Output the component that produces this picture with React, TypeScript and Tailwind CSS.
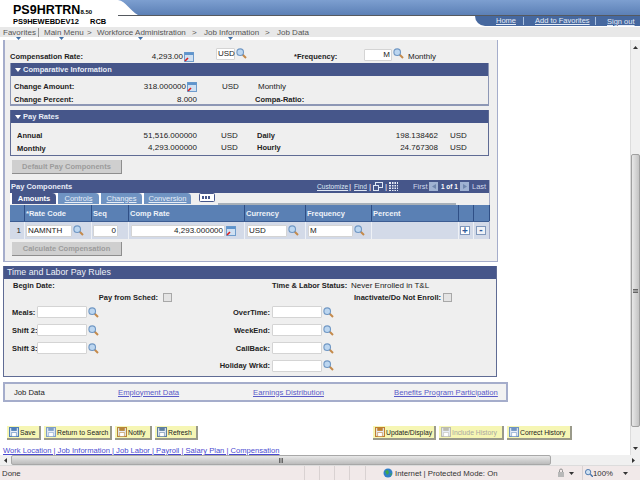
import React from "react";

const Mag = ({ className = "" }: { className?: string }) => (
  <svg width="11" height="11" viewBox="0 0 11 11" className={"shrink-0 " + className}>
    <line x1="6.5" y1="6.5" x2="10" y2="10" stroke="#c58a4a" strokeWidth="2" />
    <circle cx="4.2" cy="4.2" r="3.3" fill="#bcd6f0" stroke="#6f97c4" strokeWidth="1.1" />
  </svg>
);

const Cal = ({ className = "" }: { className?: string }) => (
  <svg width="10" height="10" viewBox="0 0 10 10" className={"shrink-0 " + className}>
    <rect x="0.5" y="0.5" width="9" height="9" fill="#cfe0f2" stroke="#6f9ccc" />
    <rect x="0.5" y="0.5" width="9" height="2.5" fill="#5f94cc" />
    <line x1="1" y1="9" x2="4" y2="6" stroke="#d81e1e" strokeWidth="1.6" />
  </svg>
);

const Inp = ({ w, children, right }: { w: string; children?: React.ReactNode; right?: boolean }) => (
  <div
    className={
      "h-[12px] shrink-0 bg-white border border-[#d4d4d4] rounded-[1px] text-[8px] leading-[10px] px-[1px] text-[#222] whitespace-nowrap " +
      (right ? "text-right " : "") +
      w
    }
  >
    {children}
  </div>
);

const SectionHead = ({ title }: { title: string }) => (
  <div className="h-[13px] bg-[#46568a] flex items-center pl-[4px] text-[#e8ecf6]">
    <svg width="6" height="4" viewBox="0 0 6 4" className="mr-[2px]">
      <path d="M0 0h6L3 4z" fill="#fff" />
    </svg>
    <b>{title}</b>
  </div>
);

const Tab = ({ w, label, active }: { w: string; label: string; active?: boolean }) => (
  <div
    className={
      "h-[11px] rounded-tr-[4px] flex items-center justify-center text-[7.5px] leading-none border-l-2 border-white shrink-0 " +
      (active ? "bg-[#46568a] text-white font-bold" : "bg-[#6f93c2] text-[#e6edf6] underline") +
      " " +
      w
    }
  >
    {label}
  </div>
);

const HCol = ({ w, label }: { w: string; label?: string }) => (
  <div className={"h-full border-r border-[#2f4f86] text-[#eef2f8] font-bold text-[7.5px] leading-[17px] pl-[1px] shrink-0 whitespace-nowrap " + w}>{label}</div>
);

const BCol = ({ w, children, cls = "" }: { w: string; children?: React.ReactNode; cls?: string }) => (
  <div className={"h-full border-r border-[#eef1f6] flex items-center shrink-0 " + w + " " + cls}>{children}</div>
);

const Btn = ({ w, label, icon, dim }: { w: string; label: string; icon: React.ReactNode; dim?: boolean }) => (
  <div
    className={
      "h-[14px] shrink-0 bg-[#f6f6b4] border-r-2 border-b-2 border-[#9a9a8a] flex items-center pl-[2px] gap-[1px] text-[6.8px] whitespace-nowrap overflow-hidden " +
      (dim ? "text-[#a8a8a0] " : "text-[#222] ") +
      w
    }
  >
    {icon}
    {label}
  </div>
);

const BIcon = ({ c }: { c: string }) => (
  <svg width="10" height="10" viewBox="0 0 9 9" className="shrink-0">
    <rect x="0.5" y="0.5" width="8" height="8" fill="#e8eef8" stroke={c} />
    <rect x="2" y="0.5" width="5" height="3" fill={c} />
    <rect x="2.5" y="5" width="4" height="3.5" fill="#fff" stroke={c} strokeWidth="0.5" />
  </svg>
);

const Sep = ({ w }: { w: string }) => <div className={"h-full border-r border-[#d9d2d2] shrink-0 " + w} />;

const NavMark = ({ ml }: { ml: string }) => (
  <svg width="5" height="3" viewBox="0 0 5 3" className={"shrink-0 " + ml}>
    <path d="M0 0h5L2.5 3z" fill="#3f6fa8" />
  </svg>
);

export default function App() {
  return (
    <div className="w-[640px] h-[480px] overflow-hidden bg-white flex flex-col text-[#222] font-['Liberation_Sans',Arial,sans-serif] text-[8px] leading-[11px] [&_b]:text-[7.5px]">
      <div className="flex flex-1 min-h-0">
        <div className="w-[630px] shrink-0 flex flex-col">
          {/* Header */}
          <div className="h-[27px] w-[640px] flex shrink-0">
            <div className="w-[118px] shrink-0 pl-[13px] text-black">
              <div className="h-[16px] pt-[3px] font-bold text-[12.5px] leading-[15px] whitespace-nowrap">
                PS9HRTRN<span className="text-[6px] leading-none">8.50</span>
              </div>
              <div className="flex font-bold text-[7.5px] leading-[10px] pt-[1px] whitespace-nowrap">
                <span className="w-[77px]">PS9HEWEBDEV12</span>
                <span>RCB</span>
              </div>
            </div>
            <div className="flex-1 flex flex-col">
              <div className="h-[16px] flex border-b border-[#55595f] bg-linear-to-b from-[#7d9fd0] to-[#5c80b6]">
                <svg width="20" height="15" viewBox="0 0 20 15" className="shrink-0">
                  <path d="M0 0 C8 1 12 11 20 15 L0 15 Z" fill="#fff" />
                </svg>
              </div>
              <div className="flex justify-end flex-1">
                <div className="w-[165px] h-[10px] bg-[#46689f] rounded-bl-[10px] flex items-center text-[7.5px] text-[#e4ecf8] pl-[21px] whitespace-nowrap">
                  <span className="w-[28px] h-[8px] leading-[8px] border-r border-[#a8c0e0] mr-[11px] shrink-0 underline">Home</span>
                  <span className="w-[61px] h-[8px] leading-[8px] border-r border-[#a8c0e0] mr-[11px] shrink-0 underline">Add to Favorites</span>
                  <span className="underline shrink-0">Sign out</span>
                </div>
              </div>
            </div>
          </div>
          {/* Nav */}
          <div className="h-[10px] w-[640px] bg-[#e8e8e8] shrink-0 flex items-center pl-[3px] text-[#555] whitespace-nowrap">
            <span className="w-[36px] h-[9px] leading-[9px] border-r border-[#999] mr-[5px] shrink-0">Favorites</span>
            <span className="w-[43px] shrink-0">Main Menu</span>
            <span className="w-[10px] shrink-0">&gt;</span>
            <span className="w-[95px] shrink-0">Workforce Administration</span>
            <span className="w-[12px] shrink-0">&gt;</span>
            <span className="w-[61px] shrink-0">Job Information</span>
            <span className="w-[12px] shrink-0">&gt;</span>
            <span className="shrink-0">Job Data</span>
          </div>
          <div className="h-[3px] flex shrink-0">
            <NavMark ml="ml-[16px]" />
            <NavMark ml="ml-[38px]" />
            <NavMark ml="ml-[74px]" />
            <NavMark ml="ml-[85px]" />
          </div>

          {/* Main panel */}
          <div className="ml-[3px] w-[495px] h-[222px] shrink-0 bg-[#efefef] border-l-2 border-r border-b border-[#a5adcb] pl-[5px]">
            <div className="h-[23px] pt-[7px] flex items-center">
              <b className="w-[100px] shrink-0 whitespace-nowrap mt-[3px]">Compensation Rate:</b>
              <span className="w-[73px] text-right shrink-0 mt-[3px]">4,293.00</span>
              <Cal className="ml-[1px] mt-[3px]" />
              <div className="ml-[22px] mb-[3px]"><Inp w="w-[19px]">USD</Inp></div>
              <Mag className="ml-[1px] mb-[4px]" />
              <b className="ml-[47px] w-[42px] whitespace-nowrap shrink-0 mt-[3px]">*Frequency:</b>
              <div className="ml-[28px] mb-[1px]"><Inp w="w-[28px]" right>M</Inp></div>
              <Mag className="ml-[1px] mb-[3px]" />
              <span className="ml-[4px] mt-[3px]">Monthly</span>
            </div>

            <div className="w-[479px] h-[43px] border-x border-b-2 border-[#8d97b5]">
              <SectionHead title="Comparative Information" />
              <div className="flex items-center h-[15px] mt-[3px] pl-[3px]">
                <b className="w-[80px] shrink-0">Change Amount:</b>
                <span className="w-[92px] text-right shrink-0">318.000000</span>
                <Cal className="ml-[1px]" />
                <span className="ml-[25px] w-[36px] shrink-0">USD</span>
                <span>Monthly</span>
              </div>
              <div className="flex items-center h-[11px] pl-[3px]">
                <b className="w-[80px] shrink-0">Change Percent:</b>
                <span className="w-[103px] text-right shrink-0">8.000</span>
                <b className="ml-[58px]">Compa-Ratio:</b>
              </div>
            </div>

            <div className="mt-[4px] w-[479px] h-[46px] border-x border-b border-[#5f6b94]">
              <SectionHead title="Pay Rates" />
              <div className="flex items-center h-[12px] mt-[6px] pl-[6px]">
                <b className="w-[60px] shrink-0 mt-[1px]">Annual</b>
                <span className="w-[120px] text-right shrink-0">51,516.000000</span>
                <span className="ml-[24px] w-[36px] shrink-0">USD</span>
                <b className="w-[60px] shrink-0">Daily</b>
                <span className="w-[121px] text-right shrink-0">198.138462</span>
                <span className="ml-[12px]">USD</span>
              </div>
              <div className="flex items-center h-[13px] pl-[6px]">
                <b className="w-[60px] shrink-0 mt-[2px]">Monthly</b>
                <span className="w-[120px] text-right shrink-0">4,293.000000</span>
                <span className="ml-[24px] w-[36px] shrink-0">USD</span>
                <b className="w-[60px] shrink-0">Hourly</b>
                <span className="w-[121px] text-right shrink-0">24.767308</span>
                <span className="ml-[12px]">USD</span>
              </div>
            </div>

            <div className="mt-[4px] ml-[2px] w-[110px] h-[14px] bg-[#cfcfcf] border-r border-b border-[#8e8e8e] text-[#9c9c9c] flex items-center justify-center">
              <b>Default Pay Components</b>
            </div>

            {/* Pay components grid */}
            <div className="mt-[6px] w-[480px] h-[59px] border-b-2 border-r border-[#a5adc8]">
              <div className="h-[13px] bg-[#46568a] flex items-center text-white pl-[1px] whitespace-nowrap">
                <b className="w-[306px] shrink-0 text-[#e8ecf6]">Pay Components</b>
                <span className="w-[32px] underline text-[6.6px] shrink-0 text-[#dfe7f4]">Customize</span>
                <span className="w-[5px] shrink-0">|</span>
                <span className="w-[15px] underline text-[6.6px] shrink-0 text-[#dfe7f4]">Find</span>
                <span className="w-[4px] shrink-0">|</span>
                <svg width="10" height="9" viewBox="0 0 10 9" className="shrink-0">
                  <rect x="2.5" y="0.5" width="7" height="5" fill="none" stroke="#dfe7f4" />
                  <rect x="0.5" y="3.5" width="5" height="5" fill="#46568a" stroke="#dfe7f4" />
                </svg>
                <span className="w-[5px] pl-[2px] shrink-0">|</span>
                <svg width="9" height="9" viewBox="0 0 9 9" className="shrink-0 ml-[1px]">
                  <rect width="9" height="9" fill="#e8eef8" />
                  <path d="M0 2.5h9M0 5h9M0 7.5h9M2.5 0v9M5 0v9M7.5 0v9" stroke="#46568a" />
                </svg>
                <span className="ml-[15px] w-[16px] text-[7.5px] text-[#cfd8ea] shrink-0">First</span>
                <div className="w-[9px] h-[9px] bg-[#9fb2d2] shrink-0 flex items-center justify-center">
                  <svg width="4" height="5" viewBox="0 0 4 5"><path d="M4 0v5L0 2.5z" fill="#6f86ad" /></svg>
                </div>
                <span className="ml-[3px] w-[19px] shrink-0 font-bold text-[6.4px]">1 of 1</span>
                <div className="w-[9px] h-[9px] bg-[#9fb2d2] shrink-0 flex items-center justify-center">
                  <svg width="4" height="5" viewBox="0 0 4 5"><path d="M0 0v5l4-2.5z" fill="#6f86ad" /></svg>
                </div>
                <span className="ml-[3px] text-[7.5px] text-[#cfd8ea]">Last</span>
              </div>
              <div className="flex h-[12px] items-start">
                <Tab w="w-[46px]" label="Amounts" active />
                <Tab w="w-[43px]" label="Controls" />
                <Tab w="w-[43px]" label="Changes" />
                <Tab w="w-[49px]" label="Conversion" />
                <div className="w-[8px] h-full shrink-0" />
                <svg width="18" height="10" viewBox="0 0 18 10" className="shrink-0">
                  <rect x="0.5" y="0.5" width="15" height="8" rx="1" fill="#fff" stroke="#46568a" />
                  <path d="M3 4.5h9" stroke="#46568a" strokeWidth="3" strokeDasharray="2 1" />
                </svg>
                <div className="ml-[1px] w-[238px] h-[2px] mt-[10px] bg-[#a8b0b8] shrink-0" />
              </div>
              <div className="h-[17px] flex bg-[#5a80b4] border-b border-[#3c5c92]">
                <HCol w="w-[15px]" />
                <HCol w="w-[67px]" label="*Rate Code" />
                <HCol w="w-[37px]" label="Seq" />
                <HCol w="w-[116px]" label="Comp Rate" />
                <HCol w="w-[61px]" label="Currency" />
                <HCol w="w-[66px]" label="Frequency" />
                <HCol w="w-[87px]" label="Percent" />
                <HCol w="w-[15px]" />
                <HCol w="w-[16px]" />
              </div>
              <div className="h-[17px] flex bg-[#d3dae8]">
                <BCol w="w-[15px]" cls="justify-end pr-[3px]">1</BCol>
                <BCol w="w-[67px]" cls="pl-[1px]">
                  <Inp w="w-[46px]">NAMNTH</Inp>
                  <Mag className="ml-[1px]" />
                </BCol>
                <BCol w="w-[37px]" cls="pl-[1px]">
                  <Inp w="w-[25px]" right>0</Inp>
                </BCol>
                <BCol w="w-[116px]" cls="pl-[2px]">
                  <Inp w="w-[94px]" right>4,293.000000</Inp>
                  <Cal className="ml-[1px]" />
                </BCol>
                <BCol w="w-[61px]" cls="pl-[2px]">
                  <Inp w="w-[40px]">USD</Inp>
                  <Mag className="ml-[1px]" />
                </BCol>
                <BCol w="w-[66px]" cls="pl-[2px]">
                  <Inp w="w-[45px]">M</Inp>
                  <Mag className="ml-[1px]" />
                </BCol>
                <BCol w="w-[87px]" />
                <BCol w="w-[15px]" cls="pl-[1px]">
                  <div className="w-[10px] h-[9px] bg-white border border-[#7f97bb] text-[#2f5a9a] font-bold text-[10px] leading-[7px] text-center">+</div>
                </BCol>
                <BCol w="w-[16px]" cls="pl-[2px] border-r-0">
                  <div className="w-[10px] h-[9px] bg-[#eef1f6] border border-[#7f97bb] text-[#2f5a9a] font-bold text-[10px] leading-[6px] text-center">-</div>
                </BCol>
              </div>
            </div>

            <div className="mt-[3px] ml-[2px] w-[110px] h-[14px] bg-[#cfcfcf] border-r border-b border-[#8e8e8e] text-[#9c9c9c] flex items-center justify-center">
              <b>Calculate Compensation</b>
            </div>
          </div>

          {/* Time and Labor */}
          <div className="mt-[4px] ml-[3px] w-[494px] h-[111px] shrink-0 border-x border-b border-[#5f6b94] bg-[#efefef]">
            <div className="h-[13px] bg-[#46568a] text-[#eef1f8] pl-[3px] text-[8.8px] leading-[13px]">Time and Labor Pay Rules</div>
            <div className="flex items-center h-[12px] pl-[9px]">
              <b className="w-[259px] shrink-0">Begin Date:</b>
              <b className="w-[79px] shrink-0 whitespace-nowrap">Time &amp; Labor Status:</b>
              <span>Never Enrolled in T&amp;L</span>
            </div>
            <div className="flex items-center h-[12px]">
              <b className="w-[154px] text-right shrink-0">Pay from Sched:</b>
              <div className="ml-[5px] w-[9px] h-[9px] border border-[#a8a8a8] bg-[#e4e4e4] shrink-0" />
              <b className="ml-[182px] w-[84px] shrink-0 whitespace-nowrap">Inactivate/Do Not Enroll:</b>
              <div className="ml-[5px] w-[9px] h-[9px] border border-[#a8a8a8] bg-[#e4e4e4] shrink-0" />
            </div>
            {[
              ["Meals:", "OverTime:"],
              ["Shift 2:", "WeekEnd:"],
              ["Shift 3:", "CallBack:"],
            ].map(([a, b]) => (
              <div key={a} className="flex items-center h-[18px] pl-[8px]">
                <b className="w-[25px] shrink-0 whitespace-nowrap">{a}</b>
                <Inp w="w-[50px]" />
                <Mag className="ml-[1px]" />
                <b className="w-[171px] text-right shrink-0">{b}</b>
                <div className="ml-[2px]"><Inp w="w-[50px]" /></div>
                <Mag className="ml-[1px]" />
              </div>
            ))}
            <div className="flex items-center h-[17px]">
              <b className="w-[266px] text-right shrink-0">Holiday Wrkd:</b>
              <div className="ml-[2px]"><Inp w="w-[50px]" /></div>
              <Mag className="ml-[1px]" />
            </div>
          </div>

          {/* Links box */}
          <div className="mt-[5px] ml-[3px] w-[505px] h-[20px] shrink-0 border-2 border-[#a5adcb] bg-[#f2f2f2] flex items-center pl-[9px] text-[7.7px] whitespace-nowrap">
            <span className="w-[104px] shrink-0">Job Data</span>
            <span className="w-[135px] shrink-0"><span className="underline text-[#5a5ac8]">Employment Data</span></span>
            <span className="w-[141px] shrink-0"><span className="underline text-[#5a5ac8]">Earnings Distribution</span></span>
            <span className="underline text-[#5a5ac8]">Benefits Program Participation</span>
          </div>

          {/* Buttons */}
          <div className="mt-[24px] ml-[7px] h-[14px] flex shrink-0 gap-[3px]">
            <Btn w="w-[34px]" label="Save" icon={<BIcon c="#4f7fb8" />} />
            <Btn w="w-[68px]" label="Return to Search" icon={<BIcon c="#7f9fc8" />} />
            <Btn w="w-[37px]" label="Notify" icon={<BIcon c="#b8863a" />} />
            <Btn w="w-[43px]" label="Refresh" icon={<BIcon c="#5f7f9f" />} />
            <div className="w-[169px] shrink-0" />
            <Btn w="w-[63px]" label="Update/Display" icon={<BIcon c="#c08030" />} />
            <Btn w="w-[65px]" label="Include History" dim icon={<BIcon c="#bcbcb0" />} />
            <Btn w="w-[65px]" label="Correct History" icon={<BIcon c="#6f93c2" />} />
          </div>

          <div className="mt-[6px] ml-[3px] h-[9px] text-[7.6px] leading-[9px] text-[#4a4ad0] underline whitespace-nowrap shrink-0">
            Work Location | Job Information | Job Labor | Payroll | Salary Plan | Compensation
          </div>
        </div>

        {/* Vertical scrollbar */}
        <div className="w-[10px] shrink-0 mt-[40px] bg-[#f0f0f0] border-l border-[#dcdcdc] flex flex-col">
          <div className="h-[14px] flex items-center justify-center">
            <svg width="5" height="3" viewBox="0 0 5 3"><path d="M2.5 0L5 3H0z" fill="#333" /></svg>
          </div>
          <div className="mt-[100px] h-[273px] bg-linear-to-r from-[#e8e8e8] to-[#c4c4c4] border border-[#a0a0a0] rounded-[2px] shrink-0 flex items-center justify-center">
            <svg width="5" height="4" viewBox="0 0 5 4"><path d="M0 .5h5M0 2h5M0 3.5h5" stroke="#666" /></svg>
          </div>
          <div className="flex-1" />
          <div className="h-[14px] flex items-center justify-center">
            <svg width="5" height="3" viewBox="0 0 5 3"><path d="M0 0h5L2.5 3z" fill="#333" /></svg>
          </div>
        </div>
      </div>

      {/* Horizontal scrollbar */}
      <div className="h-[10px] shrink-0 bg-[#f0f0f0] flex items-center">
        <div className="w-[11px] flex justify-center shrink-0">
          <svg width="3" height="5" viewBox="0 0 3 5"><path d="M3 0v5L0 2.5z" fill="#333" /></svg>
        </div>
        <div className="w-[540px] h-full bg-linear-to-b from-[#e8e8e8] to-[#bcbcbc] border border-[#a8a8a8] rounded-[2px] shrink-0 flex items-center justify-center">
          <svg width="4" height="5" viewBox="0 0 4 5"><path d="M.5 0v5M2 0v5M3.5 0v5" stroke="#666" /></svg>
        </div>
        <div className="flex-1" />
        <div className="w-[14px] flex justify-center shrink-0">
          <svg width="3" height="5" viewBox="0 0 3 5"><path d="M0 0v5l3-2.5z" fill="#333" /></svg>
        </div>
      </div>

      {/* Status bar */}
      <div className="h-[15px] shrink-0 bg-[#f1e9e9] border-t border-[#dcdcdc] flex items-center text-[7.8px] text-[#333]">
        <div className="w-[290px] pl-[2px] shrink-0">Done</div>
        <Sep w="w-[15px]" />
        <Sep w="w-[15px]" />
        <Sep w="w-[15px]" />
        <Sep w="w-[15px]" />
        <Sep w="w-[16px]" />
        <div className="w-[17px] shrink-0" />
        <svg width="10" height="10" viewBox="0 0 10 10" className="shrink-0">
          <circle cx="5" cy="5" r="4.5" fill="#2f7fc8" />
          <path d="M2 3l3-1 1 3-2 2zM7 6l2-1-1 3z" fill="#3fa84a" />
        </svg>
        <span className="ml-[2px] w-[160px] shrink-0 whitespace-nowrap">Internet | Protected Mode: On</span>
        <svg width="10" height="10" viewBox="0 0 10 10" className="shrink-0">
          <rect x="3" y="4" width="6" height="5" fill="#b8b8b8" />
          <path d="M4.5 4V2.5a1.5 1.5 0 013 0V4" fill="none" stroke="#8f8f8f" />
        </svg>
        <svg width="5" height="3" viewBox="0 0 5 3" className="ml-[4px] shrink-0"><path d="M0 0h5L2.5 3z" fill="#333" /></svg>
        <div className="ml-[8px] mr-[2px] h-full border-l border-[#d9d2d2]" />
        <svg width="8" height="8" viewBox="0 0 9 9" className="shrink-0">
          <circle cx="3.5" cy="3.5" r="3" fill="#cfe0f2" stroke="#3f6fa8" />
          <line x1="6" y1="6" x2="9" y2="9" stroke="#3f6fa8" strokeWidth="1.5" />
        </svg>
        <span className="ml-[0px] w-[28px] shrink-0">100%</span>
        <svg width="5" height="3" viewBox="0 0 5 3" className="ml-[2px] shrink-0"><path d="M0 0h5L2.5 3z" fill="#333" /></svg>
      </div>
    </div>
  );
}
